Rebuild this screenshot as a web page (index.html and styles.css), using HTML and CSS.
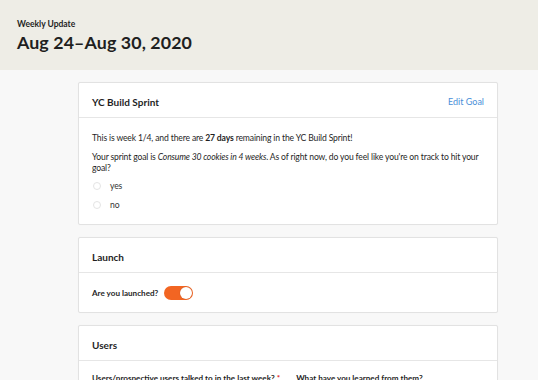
FILE: index.html
```html
<!DOCTYPE html>
<html>
<head>
<meta charset="utf-8">
<link rel="stylesheet" href="styles.css">
</head>
<body>
<header class="top">
  <div class="eyebrow">Weekly Update</div>
  <h1 class="title">Aug 24–Aug 30, 2020</h1>
</header>
<main class="content">
  <section class="card">
    <div class="card-head">
      <span class="card-title">YC Build Sprint</span>
      <a class="link">Edit Goal</a>
    </div>
    <div class="card-body">
      <p class="para">This is week 1/4, and there are <b>27 days</b> remaining in the YC Build Sprint!</p>
      <p class="para last">Your sprint goal is <i>Consume 30 cookies in 4 weeks</i>. As of right now, do you feel like you're on track to hit your goal?</p>
      <label class="radio"><span class="dot"></span>yes</label>
      <label class="radio"><span class="dot"></span>no</label>
    </div>
  </section>
  <section class="card">
    <div class="card-head"><span class="card-title">Launch</span></div>
    <div class="card-body row">
      <span class="q">Are you launched?</span>
      <span class="toggle"><span class="knob"></span></span>
    </div>
  </section>
  <section class="card">
    <div class="card-head"><span class="card-title">Users</span></div>
    <div class="card-body cols">
      <span class="q">Users/prospective users talked to in the last week? <span class="req">*</span></span>
      <span class="q">What have you learned from them?</span>
    </div>
  </section>
</main>
</body>
</html>
```
FILE: styles.css
```css
* { box-sizing: border-box; }
html, body { margin: 0; padding: 0; }
body {
  background: #f8f8f8;
  font-family: Lato, "Open Sans", sans-serif;
  color: #1f1f1f;
  width: 538px;
  height: 380px;
  overflow: hidden;
}
.top {
  background: #eeede6;
  height: 70px;
  padding: 19px 17px 0;
}
.eyebrow {
  font-size: 8.5px;
  font-weight: 700;
  line-height: 11px;
}
.title {
  margin: 1px 0 0;
  font-size: 17.8px;
  font-weight: 700;
  line-height: 22px;
  letter-spacing: 0.1px;
}
.content {
  padding: 12px 0 0 78px;
  display: flex;
  flex-direction: column;
  gap: 12px;
}
.card {
  width: 420px;
  background: #fff;
  border: 1px solid #e2e2e2;
  border-radius: 2px;
  box-shadow: 0 0 1px rgba(0,0,0,0.05);
}
.card-head {
  height: 35px;
  border-bottom: 1px solid #e6e6e6;
  display: flex;
  align-items: center;
  justify-content: space-between;
  padding: 3px 13px 0;
}
.card-title {
  font-size: 10px;
  font-weight: 700;
}
.link {
  font-size: 9px;
  color: #4a90d9;
}
.card-body {
  padding: 15px 13px 10px;
  font-size: 8.6px;
  letter-spacing: -0.15px;
}
.para {
  margin: 0 0 8px;
  line-height: 11px;
}
.para.last { margin-bottom: 2px; }
.radio {
  display: flex;
  align-items: center;
  gap: 9px;
  height: 19px;
  padding-left: 1px;
  color: #333;
}
.dot {
  width: 8px;
  height: 8px;
  border-radius: 50%;
  border: 1px solid #e4e4e4;
  background: #fff;
}
.row {
  display: flex;
  align-items: center;
  gap: 6px;
  height: 39px;
  padding-top: 1px;
  padding-bottom: 0;
  letter-spacing: 0;
}
.q {
  font-weight: 700;
  font-size: 8.1px;
  letter-spacing: 0;
}
.toggle {
  width: 29px;
  height: 14px;
  border-radius: 7px;
  background: #f26522;
  position: relative;
  display: inline-block;
}
.knob {
  position: absolute;
  right: 1px;
  top: 1px;
  width: 12px;
  height: 12px;
  border-radius: 50%;
  background: #fff;
  box-shadow: 0 0 1px rgba(0,0,0,0.3);
}
.cols {
  display: flex;
  gap: 16px;
  padding-top: 12px;
}
.req { color: #e02424; }
```
